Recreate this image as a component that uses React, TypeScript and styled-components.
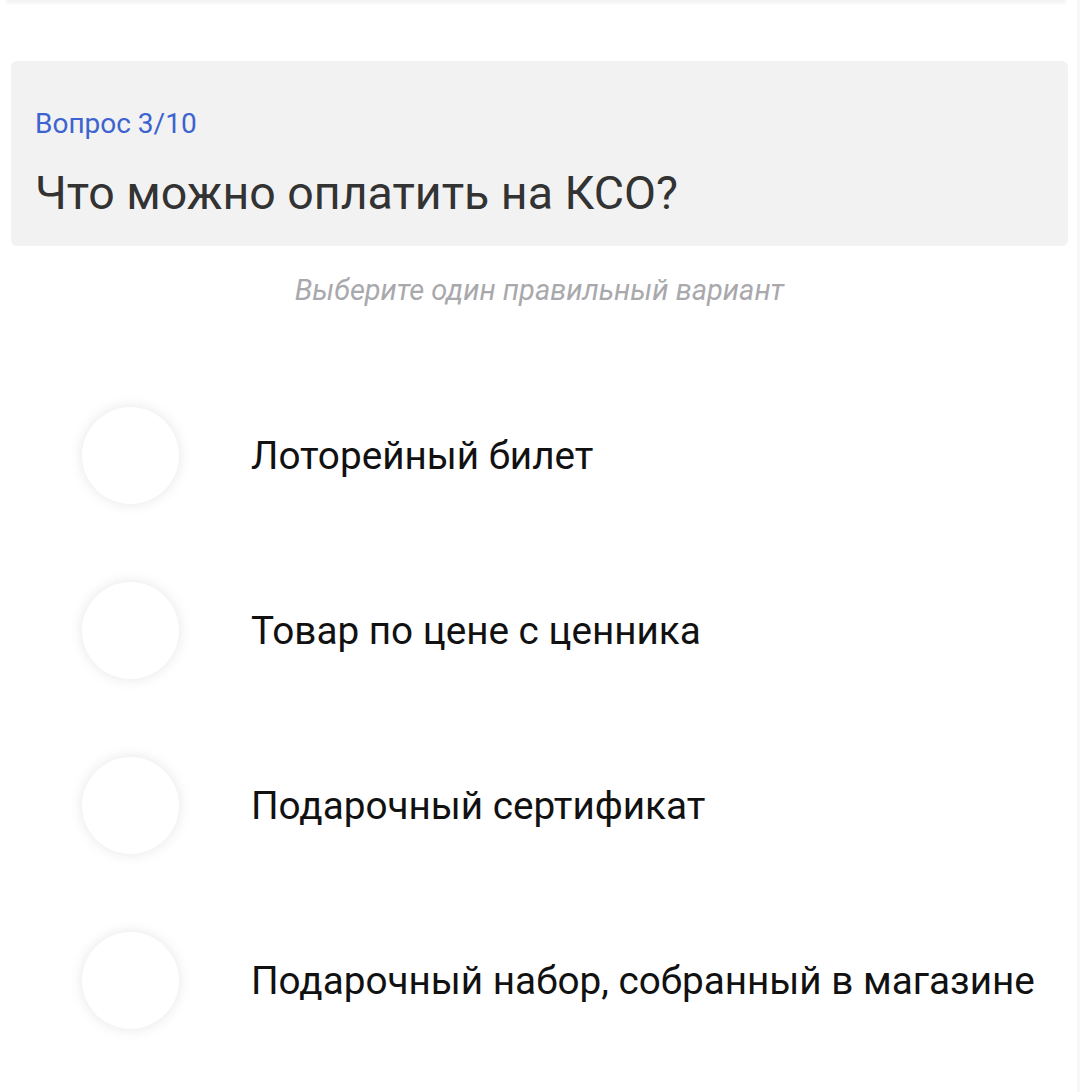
import React, { useState } from "react";
import styled, { createGlobalStyle } from "styled-components";

const GlobalStyle = createGlobalStyle`
  html, body {
    margin: 0;
    padding: 0;
    background: #ffffff;
    font-family: Roboto, "Noto Sans", "Liberation Sans", sans-serif;
  }
`;

const OPTIONS = [
  "Лоторейный билет",
  "Товар по цене с ценника",
  "Подарочный сертификат",
  "Подарочный набор, собранный в магазине",
];

export default function App() {
  const [selected, setSelected] = useState<number | null>(null);

  return (
    <>
      <GlobalStyle />
      <Page>
        <PrevCard />
        <QuestionCard>
          <Counter>Вопрос 3/10</Counter>
          <Title>Что можно оплатить на КСО?</Title>
        </QuestionCard>
        <Hint>Выберите один правильный вариант</Hint>
        <Options>
          {OPTIONS.map((label, i) => (
            <Option key={label} onClick={() => setSelected(i)}>
              <Radio active={selected === i} />
              <Label>{label}</Label>
            </Option>
          ))}
        </Options>
      </Page>
    </>
  );
}

const Page = styled.div`
  min-height: 1092px;
  box-sizing: border-box;
  padding: 0 9px 0 11px;
  border-right: 3px solid #f7f7f7;
`;

const PrevCard = styled.div`
  height: 2px;
  margin: 0 2px 0 -5px;
  background: #f4f4f4;
  border-radius: 0 0 4px 4px;
  box-shadow: 0 1px 3px rgba(0, 0, 0, 0.08);
`;

const QuestionCard = styled.div`
  margin-top: 59px;
  height: 185px;
  box-sizing: border-box;
  padding: 46px 24px 0;
  background: #f2f2f2;
  border-radius: 6px;
`;

const Counter = styled.div`
  font-size: 28px;
  line-height: 34px;
  color: #3c63d0;
`;

const Title = styled.div`
  margin-top: 25px;
  font-size: 46.5px;
  line-height: 54px;
  color: #333333;
`;

const Hint = styled.div`
  margin-top: 25px;
  text-align: center;
  font-size: 29px;
  line-height: 38px;
  font-style: italic;
  color: #a9a9ad;
`;

const Options = styled.div`
  display: flex;
  flex-direction: column;
  gap: 78px;
  margin-top: 98px;
  padding-left: 71px;
`;

const Option = styled.div`
  display: flex;
  align-items: center;
  gap: 72px;
  cursor: pointer;
`;

const Radio = styled.div<{ active: boolean }>`
  flex: none;
  width: 97px;
  height: 97px;
  border-radius: 50%;
  background: ${(p) => (p.active ? "#3c63d0" : "#ffffff")};
  box-shadow: 0 0 14px rgba(0, 0, 0, 0.1);
`;

const Label = styled.div`
  font-size: 38.7px;
  line-height: 46px;
  color: #111111;
`;
